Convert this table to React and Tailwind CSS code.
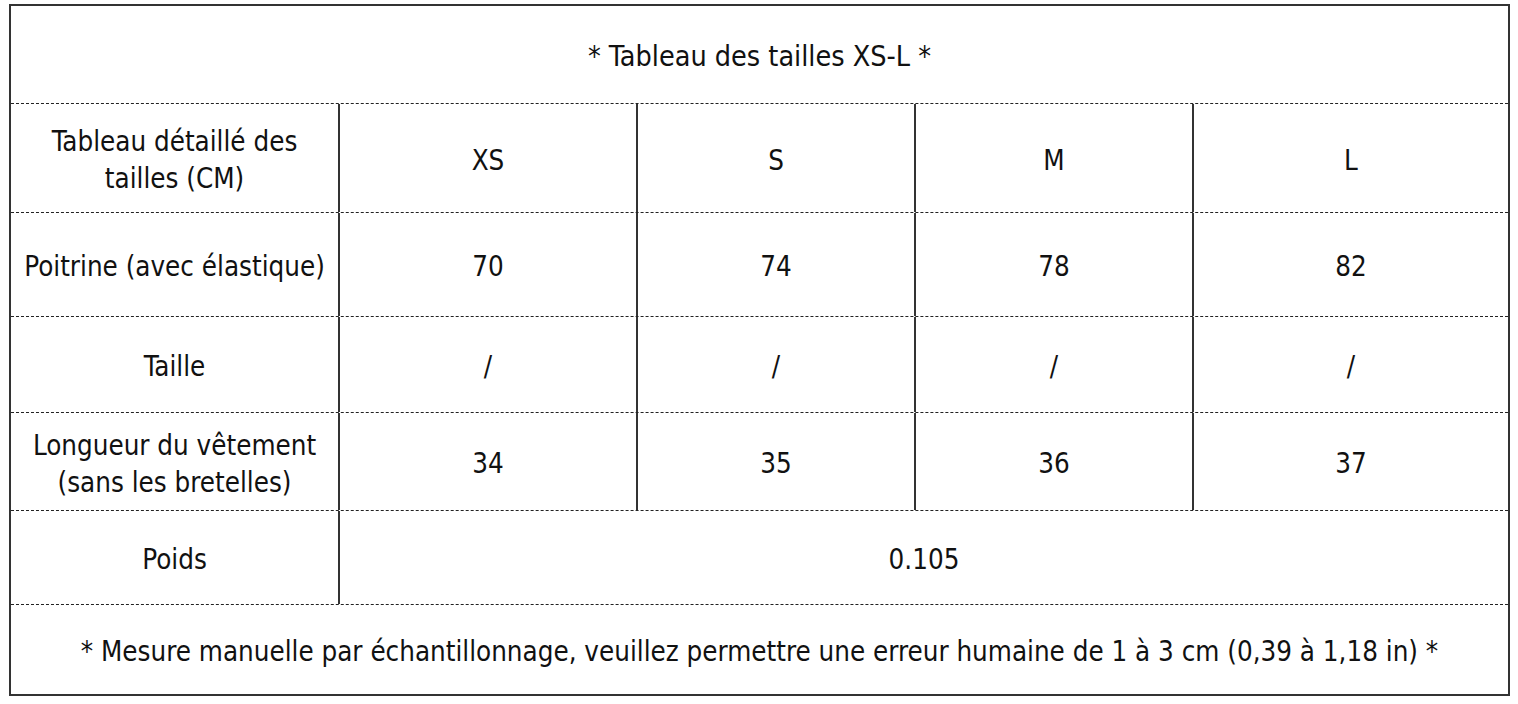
const rows = [
  { label: ['Tableau détaillé des', 'tailles (CM)'], values: ['XS', 'S', 'M', 'L'], h: 'h-[109px]' },
  { label: ['Poitrine (avec élastique)'], values: ['70', '74', '78', '82'], h: 'h-[104px]' },
  { label: ['Taille'], values: ['/', '/', '/', '/'], h: 'h-[96px]' },
  { label: ['Longueur du vêtement', '(sans les bretelles)'], values: ['34', '35', '36', '37'], h: 'h-[98px]' },
];

const cell = 'flex flex-col items-center justify-center text-center pt-[4px]';

export default function App() {
  return (
    <div className="min-h-screen bg-white pt-[4px] pl-[9px] text-[#111] text-[27.5px] leading-[37px] [font-family:'DejaVu_Sans_Condensed','DejaVu_Sans',sans-serif]">
      <div className="w-[1501px] border-2 border-[#333]">
        <div className={`${cell} h-[97px] text-[28.5px]`}>* Tableau des tailles XS-L *</div>

        {rows.map((r, i) => (
          <div key={i} className={`grid grid-cols-[327px_298px_278px_278px_1fr] border-t border-dashed border-[#222] ${r.h}`}>
            <div className={cell}>
              {r.label.map((t) => (
                <span key={t}>{t}</span>
              ))}
            </div>
            {r.values.map((v, j) => (
              <div key={j} className={`${cell} border-l-2 border-[#333]`}>
                {v}
              </div>
            ))}
          </div>
        ))}

        <div className="grid grid-cols-[327px_1fr] border-t border-dashed border-[#222] h-[94px]">
          <div className={cell}>Poids</div>
          <div className={`${cell} border-l-2 border-[#333]`}>0.105</div>
        </div>

        <div className={`${cell} border-t border-dashed border-[#222] h-[90px]`}>
          * Mesure manuelle par échantillonnage, veuillez permettre une erreur humaine de 1 à 3 cm (0,39 à 1,18 in) *
        </div>
      </div>
    </div>
  );
}
